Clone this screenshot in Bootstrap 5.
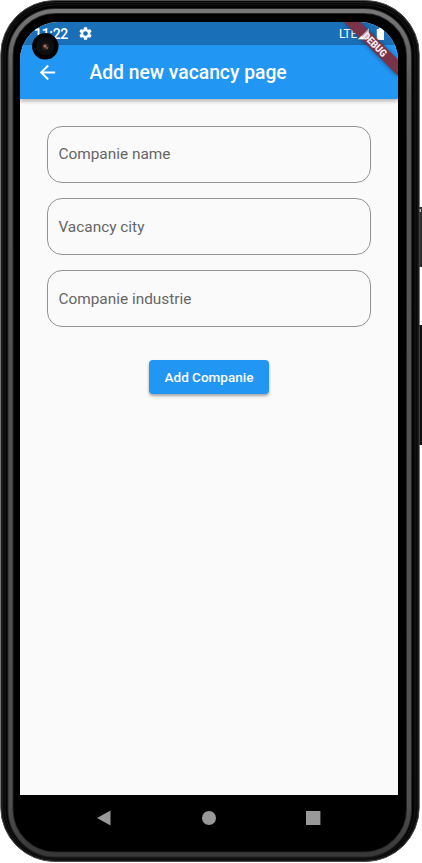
<!DOCTYPE html>
<html lang="en">
<head>
<meta charset="utf-8">
<meta name="viewport" content="width=device-width, initial-scale=1">
<title>Add new vacancy page</title>
<link href="https://cdn.jsdelivr.net/npm/bootstrap@5.3.0/dist/css/bootstrap.min.css" rel="stylesheet">
<style>
body{font-family:Roboto,"Liberation Sans",sans-serif;background:#fff;width:422px;height:863px;overflow:hidden}
.device{width:422px;height:863px;padding:22px 24px 0 20px}
.shell{left:0;top:0;z-index:0}
.screen{width:378px;height:773px;background:#fafafa;border-radius:38px 38px 0 0;z-index:1}
.statusbar{height:23px;background:#1a70b8;color:#fff;padding:0 12px 0 14px}
.clock{font-size:14px;letter-spacing:-.3px;line-height:23px;font-weight:500;width:45px;padding-top:1px}
.lte{font-size:12px;line-height:23px;margin-right:1px;letter-spacing:-.3px;padding-top:1px}
.appbar{height:54px;background:#2196f3;color:#fff;padding-left:16px;box-shadow:0 2px 4px rgba(0,0,0,.3)}
.page-title{font-size:19.3px;font-weight:500;line-height:54px;margin-left:30.4px;padding-top:2px}
.fields{padding:27px 27px 0;gap:15.5px}
.fields .form-control{height:56.7px;border:1px solid #929292;border-radius:15px;background:transparent;font-size:15.4px;padding:0 10.4px;color:#666}
.fields .form-control::placeholder{color:#666;opacity:1}
.btn-add{width:120px;height:34px;margin-top:33px;background:#2196f3;color:#fff;font-size:13.5px;font-weight:500;border-radius:4px;border:0;box-shadow:0 2px 3px rgba(0,0,0,.35)}
.camera{left:32px;top:33px;z-index:3}
.ribbon{right:0;top:0;z-index:2}
.navkeys{z-index:1;width:378px;height:46px;padding:0 77px 0 76px}
</style>
<script src="https://cdn.jsdelivr.net/npm/bootstrap@5.3.0/dist/js/bootstrap.bundle.min.js"></script>
</head>
<body>
<div class="device position-relative">
  <svg class="shell position-absolute" width="422" height="863" viewBox="0 0 422 863">
    <defs><linearGradient id="bevel" x1="0" y1="0" x2="0" y2="1"><stop offset="0" stop-color="#777"/><stop offset=".1" stop-color="#555"/><stop offset=".94" stop-color="#505050"/><stop offset="1" stop-color="#383838"/></linearGradient></defs>
    <rect x="417" y="207" width="6" height="60" rx="1" fill="#303030"/>
    <rect x="419" y="209" width="2" height="3" fill="#bbb"/>
    <rect x="417" y="325" width="6" height="120" rx="1" fill="#111"/>
    <rect x=".8" y=".5" width="418.4" height="861" rx="54" fill="#080808" stroke="#4c504c"/>
    <rect x="2.5" y="2.5" width="415.5" height="857.5" rx="52" fill="none" stroke="#1c1c1c"/>
    <rect x="5" y="5" width="410" height="853" rx="50" fill="#030303" stroke="#181818"/>
    <rect x="10.5" y="11" width="398.5" height="843.5" rx="45" fill="#000" stroke="#262626" stroke-width="6"/>
    <rect x="10.5" y="11" width="398.5" height="843.5" rx="45" fill="none" stroke="url(#bevel)" stroke-width="4"/>
  </svg>
  <main class="screen position-relative overflow-hidden">
    <div class="statusbar d-flex align-items-center">
      <span class="clock">11:22</span>
      <svg width="13" height="13" viewBox="2 2 20 20" fill="#fff"><path fill-rule="evenodd" d="M19.14 12.94c.04-.3.06-.61.06-.94s-.02-.64-.07-.94l2.03-1.58a.49.49 0 0 0 .12-.61l-1.92-3.32a.49.49 0 0 0-.59-.22l-2.39.96a7 7 0 0 0-1.62-.94l-.36-2.54A.48.48 0 0 0 13.92 2.4h-3.84a.47.47 0 0 0-.47.41l-.36 2.54c-.59.24-1.13.57-1.62.94l-2.39-.96a.47.47 0 0 0-.59.22L2.74 8.87a.48.48 0 0 0 .12.61l2.03 1.58c-.05.3-.09.63-.09.94s.02.64.07.94l-2.03 1.58a.49.49 0 0 0-.12.61l1.92 3.32c.12.22.37.29.59.22l2.39-.96c.5.38 1.03.7 1.62.94l.36 2.54c.05.24.24.41.48.41h3.84c.24 0 .44-.17.47-.41l.36-2.54c.59-.24 1.13-.56 1.62-.94l2.39.96c.22.08.47 0 .59-.22l1.92-3.32a.47.47 0 0 0-.12-.61zM12 15.6A3.6 3.6 0 1 1 12 8.4a3.6 3.6 0 0 1 0 7.2z"/></svg>
      <span class="lte ms-auto">LTE</span>
      <svg width="28" height="14" viewBox="0 0 28 14" fill="#fff"><path d="M18.8 2h2V.7h3V2h2.2v11h-7.2z"/></svg>
    </div>
    <header class="appbar d-flex align-items-center">
      <svg width="23" height="23" viewBox="0 0 24 24" fill="#fff"><path d="M20 11H7.83l5.59-5.59L12 4l-8 8 8 8 1.41-1.41L7.83 13H20z"/></svg>
      <h1 class="page-title mb-0">Add new vacancy page</h1>
    </header>
    <form class="fields d-flex flex-column">
      <input class="form-control" placeholder="Companie name">
      <input class="form-control" placeholder="Vacancy city">
      <input class="form-control" placeholder="Companie industrie">
    </form>
    <div class="d-flex justify-content-center">
      <button type="button" class="btn btn-add p-0">Add Companie</button>
    </div>
    <svg class="ribbon position-absolute" width="60" height="60" viewBox="0 0 60 60">
      <defs><filter id="soft" x="-20%" y="-20%" width="140%" height="140%"><feGaussianBlur stdDeviation="2"/></filter></defs>
      <path d="M5 0H22L60 38V55z" fill="#000" opacity=".35" filter="url(#soft)"/>
      <path d="M6 0H22L60 37.5V54z" fill="#7a3349"/>
      <path d="M20 17.3h6.500L23.300 14z" fill="#fff"/>
      <path d="M20 17.3 31 6.300v11z" fill="#fff" opacity=".6"/>
      <text transform="translate(37 22.6) rotate(45)" text-anchor="middle" y="3.7" font-size="10.4" font-weight="900" fill="#f3ebed" textLength="29.5" lengthAdjust="spacingAndGlyphs">DEBUG</text>
    </svg>
  </main>
  <svg class="camera position-absolute" width="27" height="27" viewBox="0 0 27 27"><circle cx="13.3" cy="13.3" r="13.2" fill="#030303"/><circle cx="13.3" cy="13.3" r="9" fill="#0e0e0e"/><circle cx="13.5" cy="13.7" r="3.5" fill="#30231f"/><circle cx="13" cy="13" r="1.5" fill="#a37c6b"/><circle cx="15" cy="15" r="1" fill="#8b6c60"/></svg>
  <nav class="navkeys position-relative d-flex align-items-center justify-content-between">
    <svg width="15" height="16" viewBox="0 0 15 16"><path d="M1 8 14.5 .5v15z" fill="#999"/></svg>
    <svg width="14" height="14" viewBox="0 0 14 14"><circle cx="7" cy="7" r="7" fill="#999"/></svg>
    <svg width="15" height="14" viewBox="0 0 15 14"><path d="M0 0h14.400v14H0z" fill="#999"/></svg>
  </nav>
</div>
</body>
</html>
